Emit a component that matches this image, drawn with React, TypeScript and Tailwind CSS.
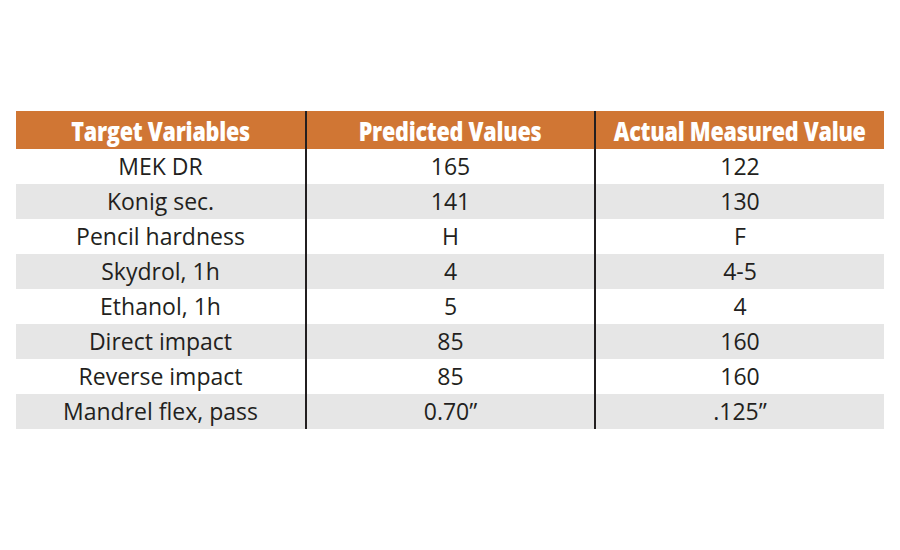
import React from "react";

const rows: [string, string, string][] = [
  ["MEK DR", "165", "122"],
  ["Konig sec.", "141", "130"],
  ["Pencil hardness", "H", "F"],
  ["Skydrol, 1h", "4", "4-5"],
  ["Ethanol, 1h", "5", "4"],
  ["Direct impact", "85", "160"],
  ["Reverse impact", "85", "160"],
  ["Mandrel flex, pass", "0.70\u201d", ".125\u201d"],
];

const headers = ["Target Variables", "Predicted Values", "Actual Measured Value"];

export default function App() {
  return (
    <div className="w-[900px] h-[550px] bg-white pt-[111px] pl-[16px]">
      <div className="w-[868px] flex flex-col">
        <div className="grid grid-cols-[289px_289px_290px] h-[38px] bg-[#d07634]">
          {headers.map((h, i) => (
            <div
              key={h}
              className={`flex items-center justify-center overflow-visible ${i > 0 ? "border-l-2 border-[#231f20]" : ""}`}
            >
              <span
                className="inline-block whitespace-nowrap text-white text-[26px] font-extrabold leading-none scale-x-[0.83] tracking-[-0.3px] mt-[1px]"
                style={{ fontFamily: '"Open Sans", sans-serif' }}
              >
                {h}
              </span>
            </div>
          ))}
        </div>
        {rows.map((r, ri) => (
          <div
            key={ri}
            className={`grid grid-cols-[289px_289px_290px] h-[35px] ${ri % 2 === 1 ? "bg-[#e6e6e6]" : "bg-white"}`}
          >
            {r.map((c, ci) => (
              <div
                key={ci}
                className={`flex items-center justify-center text-[23px] text-[#231f20] leading-none ${ci > 0 ? "border-l-2 border-[#231f20]" : ""}`}
                style={{ fontFamily: '"Open Sans", sans-serif' }}
              >
                {c}
              </div>
            ))}
          </div>
        ))}
      </div>
    </div>
  );
}
